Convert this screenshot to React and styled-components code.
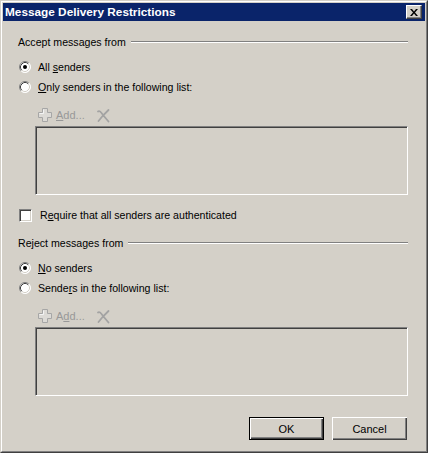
import React from 'react';
import styled, { createGlobalStyle } from 'styled-components';

const GlobalStyle = createGlobalStyle`
  html, body {
    margin: 0;
    padding: 0;
    background: #d4d0c8;
  }
  body {
    font-family: "Liberation Sans", Arial, sans-serif;
    font-size: 10.6px;
    color: #000;
  }
  u {
    text-decoration: underline;
    text-underline-offset: 1px;
  }
`;

const Window = styled.div`
  width: 428px;
  height: 453px;
  box-sizing: border-box;
  background: #d4d0c8;
  border: 1px solid;
  border-color: #d4d0c8 #404040 #404040 #d4d0c8;
  display: flex;
  flex-direction: column;
`;

const Frame = styled.div`
  flex: 1;
  display: flex;
  flex-direction: column;
  border: 1px solid;
  border-color: #fff #808080 #808080 #fff;
  padding: 1px;
`;

const TitleBar = styled.div`
  height: 18px;
  flex: none;
  background: #0a246a;
  color: #fff;
  display: flex;
  align-items: center;
  justify-content: space-between;
  padding: 0 3px 0 2px;
  font-weight: bold;
  font-size: 11.8px;
`;

const CloseButton = styled.div`
  width: 16px;
  height: 14px;
  box-sizing: border-box;
  background: #d4d0c8;
  border: 1px solid;
  border-color: #fff #404040 #404040 #fff;
  box-shadow: inset -1px -1px #808080;
  display: flex;
  align-items: center;
  justify-content: center;
`;

const Body = styled.div`
  flex: 1;
  display: flex;
  flex-direction: column;
  padding: 14px 17px 0 15px;
`;

const GroupHeader = styled.div`
  height: 14px;
  display: flex;
  align-items: center;
  gap: 5px;
  margin-top: ${(p) => p.$top || 0}px;
`;

const EtchedLine = styled.div`
  flex: 1;
  border-top: 1px solid #808080;
  border-bottom: 1px solid #fff;
`;

const OptionRow = styled.label`
  height: 16px;
  display: flex;
  align-items: center;
  gap: ${(p) => p.$gap || 7}px;
  padding-left: 1px;
  margin-top: ${(p) => p.$top || 0}px;
`;

const CheckBox = styled.span`
  width: 13px;
  height: 13px;
  box-sizing: border-box;
  background: #fff;
  border: 1px solid;
  border-color: #808080 #fff #fff #808080;
  box-shadow: inset 1px 1px #404040, inset -1px -1px #d4d0c8;
`;

const Toolbar = styled.div`
  height: 16px;
  display: flex;
  align-items: center;
  margin: 12px 0 0 19px;
  color: #989898;
  font-size: 11px;
`;

const ToolText = styled.span`
  margin: 0 11px 0 3px;
`;

const ListBox = styled.div`
  height: 69px;
  box-sizing: border-box;
  margin: 3px 0 0 17px;
  background: #d4d0c8;
  border: 1px solid;
  border-color: #808080 #fff #fff #808080;
  box-shadow: inset 1px 1px #404040, inset -1px -1px #d4d0c8;
`;

const Footer = styled.div`
  display: flex;
  justify-content: flex-end;
  gap: 8px;
  margin-top: 21px;
  padding-right: 1px;
`;

const Button = styled.button`
  width: 75px;
  height: 23px;
  box-sizing: border-box;
  padding: 0;
  font-family: "Liberation Sans", Arial, sans-serif;
  font-size: 11px;
  color: #000;
  background: #d4d0c8;
  border: ${(p) => (p.$default ? '1px solid #000' : 'none')};
  box-shadow: inset 1px 1px #fff, inset -1px -1px #404040,
    inset -2px -2px #808080;
`;

const Radio = ({ checked }) => (
  <svg width="12" height="12" viewBox="0 0 12 12">
    <circle cx="6" cy="6" r="5.5" fill="#fff" />
    <path d="M2.11 9.89 A5.5 5.5 0 0 1 9.89 2.11" fill="none" stroke="#808080" />
    <path d="M9.89 2.11 A5.5 5.5 0 0 1 2.11 9.89" fill="none" stroke="#fff" />
    <path d="M2.82 9.18 A4.5 4.5 0 0 1 9.18 2.82" fill="none" stroke="#404040" />
    <path d="M9.18 2.82 A4.5 4.5 0 0 1 2.82 9.18" fill="none" stroke="#d4d0c8" />
    {checked && <circle cx="6" cy="6" r="2" fill="#000" />}
  </svg>
);

const PlusIcon = () => (
  <svg width="16" height="16" viewBox="0 0 16 16">
    <path
      d="M5.5 1.5h5v4h4v5h-4v4h-5v-4h-4v-5h4z"
      fill="#dcdad6"
      stroke="#a6a6a6"
    />
    <path d="M6.5 2.5v4h-4" fill="none" stroke="#f4f4f4" />
  </svg>
);

const DeleteIcon = () => (
  <svg width="15" height="15" viewBox="0 0 15 15">
    <path
      d="M2 3.5 Q4 2 7 7 L12.5 13.5 M12.5 2 L7 7.5 L2.5 13"
      fill="none"
      stroke="#a3a3a3"
      strokeWidth="1.8"
      strokeLinecap="round"
    />
  </svg>
);

const CloseGlyph = () => (
  <svg width="8" height="7" viewBox="0 0 8 7">
    <path d="M0 0h2l2 2.5L6 0h2L5 3.5 8 7H6L4 4.5 2 7H0l3-3.5z" fill="#000" />
  </svg>
);

const SenderPicker = ({ addKey }) => (
  <>
    <Toolbar>
      <PlusIcon />
      <ToolText>{addKey}</ToolText>
      <DeleteIcon />
    </Toolbar>
    <ListBox />
  </>
);

export default function App() {
  return (
    <>
      <GlobalStyle />
      <Window>
        <Frame>
          <TitleBar>
            <span>Message Delivery Restrictions</span>
            <CloseButton>
              <CloseGlyph />
            </CloseButton>
          </TitleBar>
          <Body>
            <GroupHeader>
              <span>Accept messages from</span>
              <EtchedLine />
            </GroupHeader>
            <OptionRow $top={10}>
              <Radio checked />
              <span>All <u>s</u>enders</span>
            </OptionRow>
            <OptionRow $top={4}>
              <Radio />
              <span><u>O</u>nly senders in the following list:</span>
            </OptionRow>
            <SenderPicker addKey={<><u>A</u>dd...</>} />

            <OptionRow $top={12} $gap={8}>
              <CheckBox />
              <span>R<u>e</u>quire that all senders are authenticated</span>
            </OptionRow>

            <GroupHeader $top={13}>
              <span>Reject messages from</span>
              <EtchedLine />
            </GroupHeader>
            <OptionRow $top={10}>
              <Radio checked />
              <span><u>N</u>o senders</span>
            </OptionRow>
            <OptionRow $top={4}>
              <Radio />
              <span>Sende<u>r</u>s in the following list:</span>
            </OptionRow>
            <SenderPicker addKey={<>A<u>d</u>d...</>} />

            <Footer>
              <Button $default>OK</Button>
              <Button>Cancel</Button>
            </Footer>
          </Body>
        </Frame>
      </Window>
    </>
  );
}
